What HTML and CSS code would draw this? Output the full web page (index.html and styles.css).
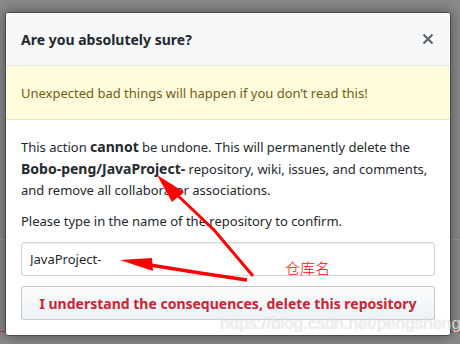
FILE: index.html
```html
<!DOCTYPE html>
<html lang="en">
<head>
  <meta charset="UTF-8">
  <meta name="viewport" content="width=device-width, initial-scale=1">
  <link rel="stylesheet" href="styles.css">
  <title>Delete repository</title>
</head>
<body>
  <div class="modal">
    <div class="modal-header">
      <h3 class="modal-title">Are you absolutely sure?</h3>
      <button class="close" aria-label="Close">
        <svg width="12" height="12" viewBox="0 0 12 12"><path d="M1.5 1.5l9 9M10.5 1.5l-9 9" stroke="#586069" stroke-width="2" fill="none"/></svg>
      </button>
    </div>
    <div class="flash">Unexpected bad things will happen if you don’t read this!</div>
    <div class="modal-body">
      <p>This action <strong>cannot</strong> be undone. This will permanently delete the <strong>Bobo-peng/JavaProject-</strong> repository, wiki, issues, and comments, and remove all collaborator associations.</p>
      <p>Please type in the name of the repository to confirm.</p>
      <input type="text" class="form-control" value="JavaProject-">
      <button class="btn-danger">I understand the consequences, delete this repository</button>
    </div>
  </div>

  <!-- annotation drawn over the screenshot -->
  <svg class="marks" width="460" height="344" viewBox="0 0 460 344">
    <path d="M253 276 L214 230 L172 190" stroke="#f00" stroke-width="3" fill="none"/>
    <polygon points="157,175 184,192 172,202" fill="#f00"/>
    <path d="M247 280 L200 273 L150 265" stroke="#f00" stroke-width="3.5" fill="none"/>
    <polygon points="120,260 152,258 153,271" fill="#f00"/>
  </svg>
  <span class="note">仓库名</span>
  <span class="watermark">https://blog.csdn.net/pengshengli</span>
</body>
</html>
```

FILE: styles.css
```css
* {
  margin: 0;
  padding: 0;
  box-sizing: border-box;
}
body {
  width: 460px;
  height: 344px;
  overflow: hidden;
  background: #8a8a8a linear-gradient(to bottom, transparent 239px, #9a9a9a 239px, #9a9a9a 240px, transparent 240px, transparent 331px, #c4343c 331px, #c4343c 332px, transparent 332px);
  font-family: "Noto Sans", "Open Sans", Arial, sans-serif;
  font-size: 13px;
  color: #24292e;
  padding: 12px 0 0 5px;
}
.modal {
  width: 446px;
  background: #fff;
  border: 1px solid #444d56;
  border-radius: 3px;
  box-shadow: 0 0 14px rgba(0, 0, 0, 0.45);
  overflow: hidden;
}
.modal-header {
  height: 53px;
  background: #f6f8fa;
  border-bottom: 1px solid #e1e4e8;
  display: flex;
  align-items: center;
  justify-content: space-between;
  padding: 0 16px 0 15px;
}
.modal-title {
  font-size: 14px;
  font-weight: 700;
}
.close {
  border: 0;
  background: none;
  display: flex;
  padding: 0;
}
.flash {
  height: 54px;
  background: #fffbdd;
  color: #735c0f;
  border-bottom: 1px solid rgba(176, 136, 0, 0.2);
  display: flex;
  align-items: center;
  padding: 0 15px;
}
.modal-body {
  padding: 16px 15px 15px;
}
.modal-body p {
  line-height: 21px;
  margin-bottom: 10px;
}
.modal-body strong {
  font-size: 14px;
}
.form-control {
  display: block;
  width: 100%;
  height: 34px;
  padding: 0 8px;
  font: inherit;
  color: #24292e;
  border: 1px solid #d1d5da;
  border-radius: 3px;
  box-shadow: inset 0 1px 2px rgba(27, 31, 35, 0.075);
  outline: none;
  margin-bottom: 10px;
}
.btn-danger {
  display: block;
  width: 100%;
  height: 34px;
  font: inherit;
  font-size: 14px;
  font-weight: 700;
  color: #cb2431;
  background: linear-gradient(-180deg, #fafbfc, #eff3f6 90%);
  border: 1px solid rgba(27, 31, 35, 0.2);
  border-radius: 3px;
}
.marks {
  position: absolute;
  left: 0;
  top: 0;
}
.note {
  position: absolute;
  left: 285px;
  top: 257px;
  font-family: "Noto Sans CJK SC", sans-serif;
  font-weight: 300;
  font-size: 15px;
  color: #f00;
}
.watermark {
  position: absolute;
  left: 220px;
  top: 314px;
  font-family: "Liberation Sans", Arial, sans-serif;
  font-size: 17px;
  color: rgba(255, 255, 255, 0.75);
  text-shadow: 0 0 1px rgba(0, 0, 0, 0.25);
  white-space: nowrap;
}
```
